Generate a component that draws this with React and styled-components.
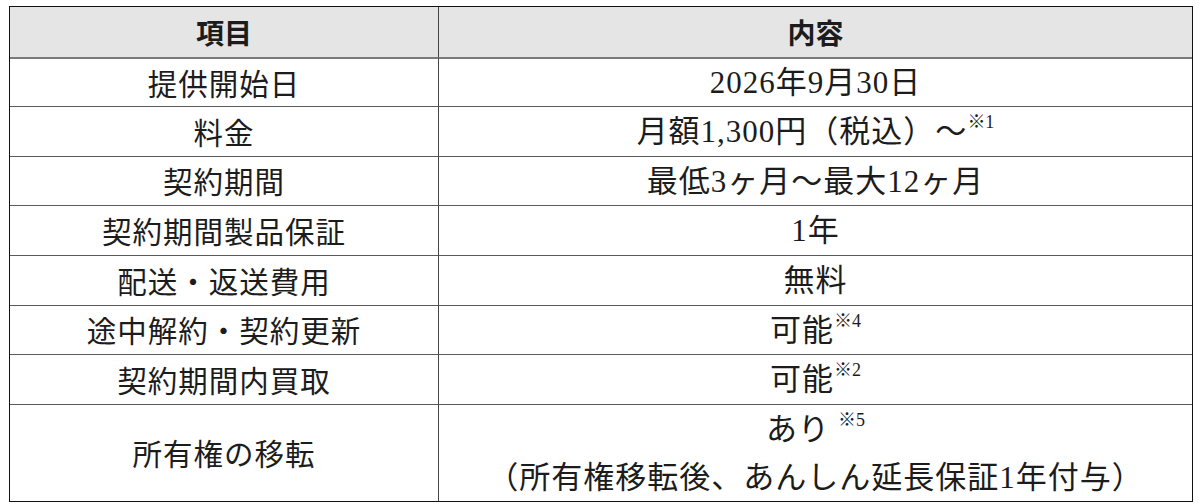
import React from "react";
import styled, { createGlobalStyle } from "styled-components";

const GlobalStyle = createGlobalStyle`
  html, body {
    margin: 0;
    padding: 0;
    background: #ffffff;
  }
  body {
    font-family: "Noto Sans CJK JP", "Noto Sans", sans-serif;
    color: #1c1c1c;
  }
`;

const Page = styled.div`
  width: 1200px;
  height: 504px;
  padding: 6px 0 0 9px;
  box-sizing: border-box;
`;

const Table = styled.div`
  display: grid;
  grid-template-columns: 429px 753px;
  grid-template-rows: 50px 49px 50px 49px 50px 50px 49px 50px 97px;
  width: 1184px;
  box-sizing: border-box;
  border: 1.5px solid #111;
`;

const Cell = styled.div`
  display: flex;
  flex-direction: column;
  align-items: center;
  justify-content: center;
  box-sizing: border-box;
  border-top: ${(p) => (p.$first ? "none" : p.$afterHead ? "2px solid #7a7a7a" : "1px solid #5a5a5a")};
  border-right: ${(p) => (p.$left ? "1.5px solid #444" : "none")};
  background: ${(p) => (p.$head ? "#e5e5e5" : "#ffffff")};
  font-size: ${(p) => (p.$head ? "28px" : p.$left ? "29.5px" : "31px")};
  font-weight: ${(p) => (p.$head ? 700 : 400)};
  letter-spacing: ${(p) => (p.$head ? "0" : "1px")};
  font-family: ${(p) =>
    p.$left || p.$head
      ? `"Noto Sans CJK JP", "Noto Sans", sans-serif`
      : `"Liberation Serif", "Noto Sans CJK JP", serif`};
  line-height: 1;
  white-space: nowrap;
`;

const Line = styled.div`
  height: 49px;
  display: flex;
  align-items: center;
`;

const Note = styled.span`
  font-family: "Liberation Serif", "Noto Sans CJK JP", serif;
  font-size: 18px;
  letter-spacing: 0;
  align-self: flex-start;
  margin-top: 6px;
  margin-left: ${(p) => p.$gap || "0"};
`;

const Text = styled.span`
  display: inline-flex;
  align-items: center;
`;

const rows = [
  { label: "提供開始日", value: "2026年9月30日" },
  { label: "料金", value: "月額1,300円（税込）～", note: "※1" },
  { label: "契約期間", value: "最低3ヶ月～最大12ヶ月" },
  { label: "契約期間製品保証", value: "1年" },
  { label: "配送・返送費用", value: "無料" },
  { label: "途中解約・契約更新", value: "可能", note: "※4" },
  { label: "契約期間内買取", value: "可能", note: "※2" },
];

export default function App() {
  return (
    <>
      <GlobalStyle />
      <Page>
        <Table>
          <Cell $first $head $left>項目</Cell>
          <Cell $first $head>内容</Cell>
          {rows.map((r, i) => (
            <React.Fragment key={r.label}>
              <Cell $left $afterHead={i === 0}>{r.label}</Cell>
              <Cell $afterHead={i === 0}>
                <Line>
                  <Text>{r.value}</Text>
                  {r.note && <Note>{r.note}</Note>}
                </Line>
              </Cell>
            </React.Fragment>
          ))}
          <Cell $left>所有権の移転</Cell>
          <Cell>
            <Line>
              <Text>あり</Text>
              <Note $gap="8px">※5</Note>
            </Line>
            <Line>
              <Text>（所有権移転後、あんしん延長保証1年付与）</Text>
            </Line>
          </Cell>
        </Table>
      </Page>
    </>
  );
}
